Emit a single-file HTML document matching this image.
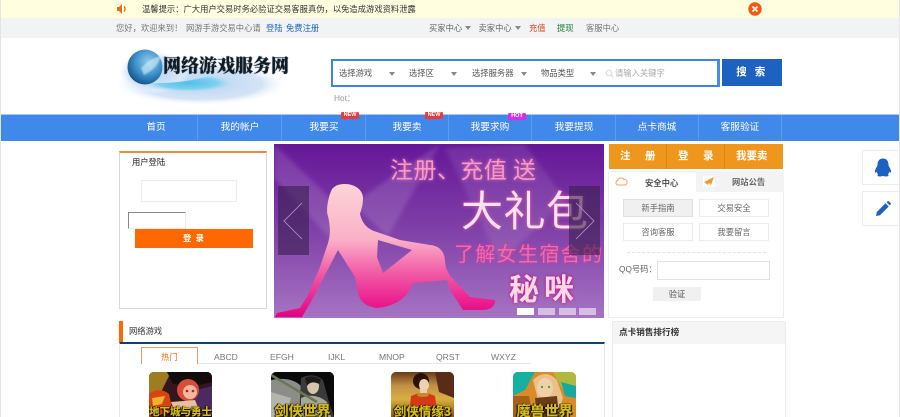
<!DOCTYPE html>
<html><head><meta charset="utf-8"><style>
*{box-sizing:border-box}
html,body{margin:0;padding:0;width:900px;height:417px;overflow:hidden;background:#fff}
body{position:relative;font-family:"Liberation Sans","Noto Sans CJK SC",sans-serif;font-size:8.3px;color:#555}
#w{position:absolute;left:0;top:0;width:900px;height:417px;overflow:hidden;filter:blur(.25px)}
.a{position:absolute;white-space:nowrap}
.b{position:absolute}
.c{text-align:center}
.tri{position:absolute;width:0;height:0;border:3px solid transparent;border-top:4px solid #888;border-bottom:0}
.tag{position:absolute;width:18px;height:7px;border-radius:1.5px;color:#fff;font-size:5.5px;font-weight:bold;line-height:7px;text-align:center}
.tag i{position:absolute;left:3px;top:7px;width:0;height:0;border-left:1.5px solid transparent;border-right:1.5px solid transparent;border-top:2px solid currentColor}
.nav{position:absolute;top:115px;height:26px;line-height:26px;color:#fff;font-size:9.7px;text-align:center;width:83px;border-right:1px solid #5c9bee}
.btn{position:absolute;background:#fff;border:1px solid #ececec;text-align:center;color:#666;width:70px;height:18px;line-height:16px;font-size:8.3px}
.tab{position:absolute;font-size:8.6px;color:#777;white-space:nowrap}
.g{position:absolute;top:372px;width:63px;height:45px;border-radius:5px 5px 0 0;overflow:hidden}
.g svg{position:absolute;left:0;top:0}
.g span{position:absolute;left:-3px;right:-3px;bottom:-2px;text-align:center;font-family:"Noto Sans CJK SC",sans-serif;font-weight:900;color:#d2ba18;font-size:14px;line-height:16px;white-space:nowrap;text-shadow:0 0 1px #000,1px 1px 1px #000,-1px 0 1px #000}
</style></head><body><div id="w">
<div class="b" style="left:0;top:0;width:1px;height:417px;background:#e4e4e4;z-index:5"></div>
<div class="b" style="right:0;top:0;width:1px;height:417px;background:#e4e4e4;z-index:5"></div>

<!-- notice bar -->
<div class="b" style="left:0;top:0;width:900px;height:18px;background:#ffffe0"></div>
<svg class="b" style="left:116px;top:3px" width="12" height="12" viewBox="0 0 12 12"><path d="M1 4h2l3-3v10L3 8H1z" fill="#f26a13"/><path d="M8 3.500a3.500 3.500 0 0 1 0 5" stroke="#f26a13" stroke-width="1.400" fill="none"/></svg>
<div class="a" style="left:142px;top:3px;line-height:12px;color:#333">温馨提示：广大用户交易时务必验证交易客服真伪，以免造成游戏资料泄露</div>
<svg class="b" style="left:748px;top:2px" width="14" height="14" viewBox="0 0 14 14"><circle cx="7" cy="7" r="6.700" fill="#f4590f"/><path d="M4.500 4.500l5 5M9.500 4.500l-5 5" stroke="#fff" stroke-width="1.700"/></svg>

<!-- top links -->
<div class="b" style="left:0;top:18px;width:900px;height:20px;background:#f2f3f5"></div>
<div class="a" style="left:116px;top:21.500px;line-height:12px;color:#777">您好，欢迎来到！</div>
<div class="a" style="left:186px;top:21.500px;line-height:12px;color:#777">网游手游交易中心请</div>
<div class="a" style="left:266px;top:21.500px;line-height:12px;color:#1d62c0">登陆</div>
<div class="a" style="left:286px;top:21.500px;line-height:12px;color:#1d62c0">免费注册</div>
<div class="a" style="left:429px;top:22px;line-height:12px;color:#666">买家中心</div><div class="tri" style="left:465px;top:26px"></div>
<div class="a" style="left:478.500px;top:22px;line-height:12px;color:#666">卖家中心</div><div class="tri" style="left:515px;top:26px"></div>
<div class="a" style="left:529px;top:21.500px;line-height:12px;color:#d4441c">充值</div>
<div class="a" style="left:557px;top:21.500px;line-height:12px;color:#1e7d32">提现</div>
<div class="a" style="left:586px;top:21.500px;line-height:12px;color:#777">客服中心</div>

<!-- logo -->
<svg class="b" style="left:117px;top:48px" width="180" height="58" viewBox="0 0 180 58">
<defs>
<radialGradient id="sw" cx=".5" cy=".5" r=".5"><stop offset="0" stop-color="#4fc0e8"/><stop offset=".6" stop-color="#7fd0ee"/><stop offset="1" stop-color="#cfe8f8" stop-opacity="0"/></radialGradient>
<radialGradient id="lg" cx=".5" cy=".5" r=".5"><stop offset="0" stop-color="#b8d4f2"/><stop offset=".7" stop-color="#d4e4f6"/><stop offset="1" stop-color="#fff" stop-opacity="0"/></radialGradient>
<radialGradient id="sp" cx=".6" cy=".35" r=".7"><stop offset="0" stop-color="#8fcdea"/><stop offset=".55" stop-color="#3f90cc"/><stop offset="1" stop-color="#124f80"/></radialGradient>
<filter id="lb"><feGaussianBlur stdDeviation=".8"/></filter>
</defs>
<ellipse cx="84" cy="36" rx="88" ry="22" fill="url(#lg)"/>
<ellipse cx="36" cy="24" rx="36" ry="22" fill="url(#lg)"/>
<path d="M22 34Q60 38 100 26Q128 22 118 36Q96 48 62 44Q34 42 22 34Z" fill="url(#sw)"/>
<circle cx="28" cy="19" r="17.500" fill="url(#sp)"/>
<path d="M24 20Q34 10 44 8Q41 20 27 27z" fill="#d8eef8" opacity=".6" filter="url(#lb)"/>
</svg>
<div class="a" style="left:163px;top:54px;font-family:'Noto Serif CJK SC',serif;font-weight:900;font-size:18px;line-height:22px;color:#0e1c28;text-shadow:0 0 1px #0e1c28">网络游戏服务网</div>

<!-- search -->
<div class="b" style="left:331px;top:59px;width:389px;height:28px;border:2px solid #3f83e4;border-right:3px solid #4a8ae6"></div>
<div class="a" style="left:339px;top:67px;line-height:12px;color:#555">选择游戏</div><div class="tri" style="left:389px;top:72px"></div>
<div class="a" style="left:409px;top:67px;line-height:12px;color:#555">选择区</div><div class="tri" style="left:451px;top:72px"></div>
<div class="a" style="left:472px;top:67px;line-height:12px;color:#555">选择服务器</div><div class="tri" style="left:521px;top:72px"></div>
<div class="a" style="left:541px;top:67px;line-height:12px;color:#555">物品类型</div><div class="tri" style="left:590px;top:72px"></div>
<svg class="b" style="left:605px;top:69px" width="9" height="9" viewBox="0 0 9 9"><circle cx="4" cy="4" r="2.800" stroke="#ddd" fill="none" stroke-width="1.200"/><path d="M6 6l2.500 2.500" stroke="#ddd" stroke-width="1.200"/></svg>
<div class="a" style="left:615px;top:66.500px;line-height:12px;color:#aaa">请输入关键字</div>
<div class="b c" style="left:722px;top:59px;width:60px;height:27px;background:#1d62c0;color:#fff;font-size:10.500px;font-weight:bold;line-height:27px;letter-spacing:2.500px">搜 索</div>
<div class="a" style="left:334px;top:92px;line-height:12px;color:#999">Hot：</div>

<!-- nav -->
<div class="b" style="left:1px;top:114px;width:898px;height:1px;background:#a8c6ef"></div>
<div class="b" style="left:1px;top:115px;width:898px;height:26px;background:#4088ea"></div>
<div class="nav" style="left:115px">首页</div>
<div class="nav" style="left:199px">我的帐户</div>
<div class="nav" style="left:283px">我要买</div>
<div class="nav" style="left:366px">我要卖</div>
<div class="nav" style="left:449px">我要求购</div>
<div class="nav" style="left:533px">我要提现</div>
<div class="nav" style="left:616px">点卡商城</div>
<div class="nav" style="left:699px">客服验证</div>
<div class="tag" style="left:341px;top:112px;background:#e93a3a">NEW<i style="color:#e93a3a"></i></div>
<div class="tag" style="left:425px;top:112px;background:#e93a3a">NEW<i style="color:#e93a3a"></i></div>
<div class="tag" style="left:508px;top:113px;background:#d92ee0">HOT<i style="color:#d92ee0"></i></div>

<!-- login -->
<div class="b" style="left:119px;top:151px;width:148px;height:158px;border:1px solid #d8d8d8;border-top:2px solid #f6873c;background:#fff"></div>
<div class="a" style="left:132px;top:156px;line-height:12px;color:#222">用户登陆</div>
<div class="b" style="left:141px;top:180px;width:96px;height:22px;border:1px solid #ececec"></div>
<div class="b" style="left:128px;top:212px;width:58px;height:17px;border:1px solid #ececec;border-top:1px solid #888;border-left:1px solid #888"></div>
<div class="b c" style="left:135px;top:229px;width:118px;height:19px;background:#ff6700;color:#fff;line-height:19px;font-weight:bold;letter-spacing:1px">登 录</div>

<!-- banner -->
<svg class="b" style="left:274px;top:144px" width="330" height="174" viewBox="274 144 330 174" font-family="'Noto Sans CJK SC','WenQuanYi Zen Hei',sans-serif">
<defs>
<linearGradient id="bg" x1="0" y1="0" x2="0" y2="1"><stop offset="0" stop-color="#661798"/><stop offset=".45" stop-color="#7d3ca6"/><stop offset="1" stop-color="#a674c3"/></linearGradient>
<linearGradient id="bd" x1="0" y1="0" x2="0" y2="1"><stop offset="0" stop-color="#fdd4d6"/><stop offset=".42" stop-color="#fab0c8"/><stop offset=".65" stop-color="#f260a8"/><stop offset="1" stop-color="#e60082"/></linearGradient>
<filter id="gl" x="-20%" y="-30%" width="140%" height="160%"><feGaussianBlur stdDeviation="1.800"/></filter>
<filter id="bm"><feGaussianBlur stdDeviation="2"/></filter>
</defs>
<rect x="274" y="144" width="330" height="174" fill="url(#bg)"/>
<g filter="url(#bm)">
<polygon points="274,144 332,200 332,240 274,178" fill="#fff" opacity=".13"/>
<polygon points="440,144 352,204 388,236" fill="#fff" opacity=".13"/>
<polygon points="445,148 524,144 566,200 500,262" fill="#fff" opacity=".09"/>
</g>
<path d="M345 184C355 184 363 190 363 198C363 206 361 210 360 214C362 222 366 229 377 232L400 240L430 245C440 246 445 252 445 262L446 268L450 276L470 297L495 300C496 306 490 310 483 310L463 310L450 290L447 280L413 283C408 296 398 306 377 308C365 306 360 302 358 292L355 277L338 250L312 300L302 317L275 317L277 313L300 308L307 297L320 267L328 243C331 234 330 225 328 216C325 210 330 190 333 188C336 185 340 184 345 184ZM378 240L377 257L383 273L412 250Z" fill="url(#bd)" fill-rule="evenodd"/>
<g fill="none">
<text x="390" y="178" font-size="23" fill="#f070b0" filter="url(#gl)" textLength="146">注册、充值 送</text>
<text x="390" y="178" font-size="23" fill="#f49cc6" textLength="146">注册、充值 送</text>
<text x="461" y="226" font-size="42" fill="#f050a0" filter="url(#gl)" textLength="127">大礼包</text>
<text x="461" y="226" font-size="42" fill="#fbe4f0" textLength="127">大礼包</text>
<text x="454" y="261" font-size="20" fill="#f03090" filter="url(#gl)" textLength="148">了解女生宿舍的</text>
<text x="454" y="261" font-size="20" fill="#ee6cae" textLength="148">了解女生宿舍的</text>
<text x="509" y="300" font-size="30" font-weight="700" fill="#d00070" filter="url(#gl)" letter-spacing="5">秘咪</text>
<text x="509" y="300" font-size="30" font-weight="700" fill="#fbd8ea" letter-spacing="5">秘咪</text>
</g>
<rect x="278" y="186" width="31" height="69" fill="#3a2050" opacity=".62"/>
<path d="M302 203L284 221L302 239" fill="none" stroke="#b894c8" stroke-width=".8"/>
<rect x="569" y="186" width="31" height="69" fill="#3a2050" opacity=".62"/>
<path d="M576 203L594 221L576 239" fill="none" stroke="#b894c8" stroke-width=".8"/>
<rect x="517" y="308" width="17" height="7" fill="#fff"/>
<rect x="538" y="308" width="17" height="7" fill="#fff" opacity=".55"/>
<rect x="559" y="308" width="17" height="7" fill="#fff" opacity=".55"/>
<rect x="579" y="308" width="17" height="7" fill="#fff" opacity=".55"/>
</svg>

<!-- right column -->
<div class="b" style="left:609px;top:144px;width:174px;height:25px;background:#ef971d"></div>
<div class="b" style="left:666px;top:144px;width:1px;height:25px;background:#dc8414"></div>
<div class="b" style="left:724px;top:144px;width:1px;height:25px;background:#dc8414"></div>
<div class="a" style="left:620px;top:149px;font-size:10.500px;line-height:15px;color:#fff;font-weight:bold">注</div>
<div class="a" style="left:645px;top:149px;font-size:10.500px;line-height:15px;color:#fff;font-weight:bold">册</div>
<div class="a" style="left:678px;top:149px;font-size:10.500px;line-height:15px;color:#fff;font-weight:bold">登</div>
<div class="a" style="left:703px;top:149px;font-size:10.500px;line-height:15px;color:#fff;font-weight:bold">录</div>
<div class="a" style="left:736px;top:149px;font-size:10.500px;line-height:15px;color:#fff;font-weight:bold">我要卖</div>
<div class="b" style="left:608px;top:171px;width:176px;height:147px;border:1px solid #eee;background:#fff"></div>
<div class="b" style="left:696px;top:171px;width:88px;height:21px;background:#f3f3f3"></div>
<svg class="b" style="left:615px;top:176px" width="13" height="10" viewBox="0 0 13 10"><path d="M3 9a2.300 2.300 0 0 1-.3-4.500A3.500 3.500 0 0 1 9 3.500 2.800 2.800 0 0 1 10 9z" fill="none" stroke="#f5a35a" stroke-width="1"/></svg>
<div class="a" style="left:645px;top:177px;line-height:12px;color:#555;font-weight:bold">安全中心</div>
<div class="b" style="left:703px;top:176px;width:12px;height:11px;background:#fff"></div>
<svg class="b" style="left:703px;top:176px" width="12" height="11" viewBox="0 0 12 11"><path d="M1 6L11 1L8 9L6 7L5 9z" fill="#f29a2c"/></svg>
<div class="a" style="left:732px;top:176px;line-height:12px;color:#666;font-weight:bold">网站公告</div>
<div class="btn" style="left:623px;top:199px;background:#f0f0f0;border-color:#e0e0e0">新手指南</div>
<div class="btn" style="left:699px;top:199px">交易安全</div>
<div class="btn" style="left:623px;top:223px">咨询客服</div>
<div class="btn" style="left:699px;top:223px">我要留言</div>
<div class="b" style="left:627px;top:252px;width:139px;height:0;border-top:1px dashed #e4e4e4"></div>
<div class="a" style="left:619px;top:263px;line-height:12px;color:#666">QQ号码：</div>
<div class="b" style="left:657px;top:261px;width:113px;height:19px;border:1px solid #e2e2e2"></div>
<div class="b c" style="left:653px;top:287px;width:48px;height:14px;background:#f0f0f0;color:#555;line-height:14px">验证</div>

<!-- side float -->
<div class="b" style="left:862px;top:150px;width:38px;height:35px;border:1px solid #ececec;border-right:0;background:#fff"></div>
<div class="b" style="left:862px;top:191px;width:38px;height:35px;border:1px solid #ececec;border-right:0;background:#fff"></div>
<svg class="b" style="left:874px;top:158px" width="18" height="19" viewBox="0 0 18 19"><path d="M9 .5C5 .5 3.500 3.500 3.500 7C3.500 8.500 1 11 .8 13.500C.8 15 1.600 15 2.800 13.800C3 15 3.500 16 4.200 16.500C3 17 3 18.500 6 18.500C7.500 18.500 8 18 9 18C10 18 10.500 18.500 12 18.500C15 18.500 15 17 13.800 16.500C14.500 16 15 15 15.200 13.800C16.400 15 17.200 15 17.200 13.500C17 11 14.500 8.500 14.500 7C14.500 3.500 13 .5 9 .5Z" fill="#1d62c0"/></svg>
<svg class="b" style="left:875px;top:201px" width="16" height="16" viewBox="0 0 16 16"><path d="M1 15L1.800 11L10.500 2.300L13.700 5.500L5 14.200Z" fill="#1d62c0"/><path d="M11.500 1.300L12.500.4C13 0 13.500 0 14 .4L15.600 2C16 2.500 16 3 15.600 3.500L14.700 4.500Z" fill="#1d62c0"/></svg>

<!-- games panel -->
<div class="b" style="left:119px;top:321px;width:4px;height:21px;background:#ff6700"></div>
<div class="a" style="left:129px;top:325px;line-height:12px;color:#333">网络游戏</div>
<div class="b" style="left:119px;top:342px;width:486px;height:75px;border-left:1px solid #e8e8e8;border-right:1px solid #e8e8e8;border-top:2px solid #0d3f80;background:#fff"></div>
<div class="b" style="left:141px;top:363px;width:390px;height:1px;background:#e6e6e6"></div>
<div class="b" style="left:141px;top:347px;width:57px;height:17px;border:1px solid #f89a5e;border-bottom:0;background:#fff"></div>
<div class="a" style="left:161px;top:351px;line-height:12px;color:#ff6700">热门</div>
<div class="tab" style="left:214px;top:351px;line-height:12px">ABCD</div>
<div class="tab" style="left:270px;top:351px;line-height:12px">EFGH</div>
<div class="tab" style="left:328px;top:351px;line-height:12px">IJKL</div>
<div class="tab" style="left:379px;top:351px;line-height:12px">MNOP</div>
<div class="tab" style="left:436px;top:351px;line-height:12px">QRST</div>
<div class="tab" style="left:491px;top:351px;line-height:12px">WXYZ</div>

<div class="g" style="left:149px;background:#2a1420"><svg width="63" height="45" viewBox="0 0 63 45">
<rect width="63" height="45" fill="#33161f"/><path d="M0 0H22L12 20L0 24Z" fill="#a07c20"/><path d="M18 0H63V10L46 14L24 12Z" fill="#120c0a"/><path d="M40 20L63 14V45H40Z" fill="#4a2a60"/>
<path d="M0 22Q10 14 20 22L24 40L0 45Z" fill="#d84410"/><path d="M3 26L16 24L13 32L4 34Z" fill="#f0b030"/>
<circle cx="39" cy="18" r="11" fill="#d84c38"/><ellipse cx="41" cy="20" rx="7" ry="7" fill="#f4b8a0"/><circle cx="38" cy="19" r="1.300" fill="#b02020"/><circle cx="44" cy="19" r="1.300" fill="#b02020"/>
<path d="M22 30L46 28L50 38L26 40Z" fill="#e8c0a0"/></svg><span style="font-size:10.500px;bottom:-2px;line-height:14px">地下城与勇士</span></div>

<div class="g" style="left:271px;background:#111"><svg width="63" height="45" viewBox="0 0 63 45">
<rect width="63" height="45" fill="#0a0a0a"/><path d="M0 8Q20 4 30 14L30 45H0Z" fill="#8c8c88"/><path d="M0 20L20 26L14 45H0Z" fill="#b4b4ac"/>
<path d="M30 6Q42 0 52 8L58 30L63 45H28Z" fill="#3a3a3a"/><ellipse cx="42" cy="14" rx="6" ry="8" fill="#d8c4ac"/><path d="M34 6Q42 2 50 8L48 12Q40 8 36 14Z" fill="#1a1a1a"/><path d="M30 26Q44 20 56 30L60 45H30Z" fill="#a8a89a"/>
<path d="M0 3L46 30" stroke="#6a7850" stroke-width="2.500"/></svg><span>剑侠世界</span></div>

<div class="g" style="left:391px;background:#a87030"><svg width="63" height="45" viewBox="0 0 63 45">
<defs><linearGradient id="g3" x1="0" y1="0" x2="0" y2="1"><stop offset="0" stop-color="#6a3a18"/><stop offset=".3" stop-color="#c09048"/><stop offset=".6" stop-color="#d8b040"/><stop offset="1" stop-color="#8a5818"/></linearGradient></defs>
<rect width="63" height="45" fill="url(#g3)"/><path d="M44 0H63V26L48 20Z" fill="#5a2c18"/><ellipse cx="30" cy="9" rx="8" ry="8" fill="#2a1408"/><ellipse cx="33" cy="13" rx="5" ry="6" fill="#f0d0b0"/><rect x="29" y="17" width="7" height="7" fill="#efcba8"/>
<path d="M20 24Q32 18 44 24L46 40L18 42Z" fill="#d63a14"/><ellipse cx="32" cy="23" rx="6" ry="2" fill="#b89030"/></svg><span style="font-size:12.500px">剑侠情缘3</span></div>

<div class="g" style="left:513px;background:#18b0a0"><svg width="63" height="45" viewBox="0 0 63 45">
<rect width="63" height="45" fill="#d88c28"/><path d="M0 0H22L12 18L0 24Z" fill="#14b0a0"/><path d="M40 0H63V14L50 18Z" fill="#b0b840"/><path d="M48 10L63 14V26L52 24Z" fill="#18a8a0"/><path d="M0 24L16 24L20 45H0Z" fill="#a86018"/>
<path d="M20 8Q32 -4 44 8L50 26L44 45H22L24 24Z" fill="#e8c088"/><ellipse cx="32" cy="16" rx="8" ry="10" fill="#f0d0a8"/><circle cx="29" cy="15" r="1.200" fill="#40b040"/><circle cx="36" cy="15" r="1.200" fill="#40b040"/><path d="M22 26L44 24L46 45H24Z" fill="#6a3c18"/></svg><span>魔兽世界</span></div>

<!-- ranking -->
<div class="b" style="left:612px;top:321px;width:174px;height:96px;border:1px solid #ececec;border-bottom:0;background:#fff;border-radius:2px 2px 0 0"></div>
<div class="b" style="left:613px;top:322px;width:172px;height:22px;background:#f5f5f5"></div>
<div class="a" style="left:619px;top:326px;line-height:12px;color:#333;font-weight:bold;font-size:8.600px">点卡销售排行榜</div>
</div></body></html>
